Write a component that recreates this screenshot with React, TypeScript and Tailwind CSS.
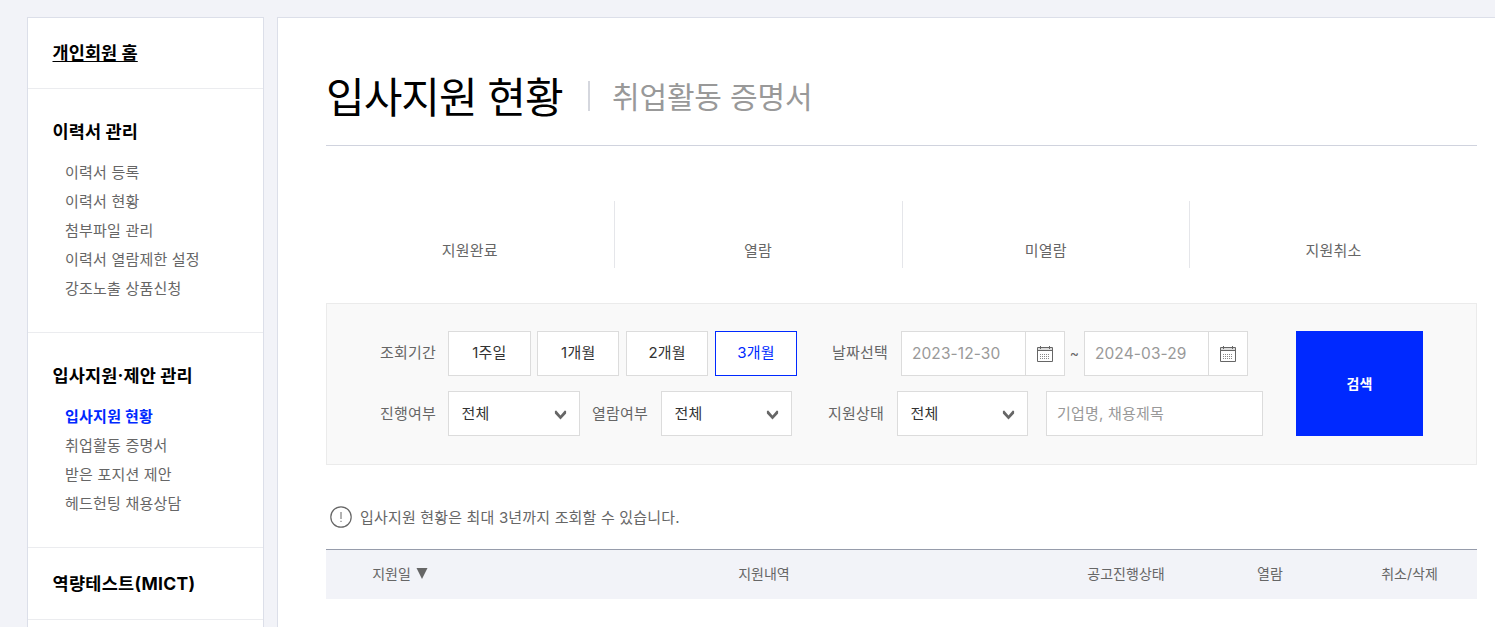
import React from "react";

const resumeMenu = ["이력서 등록", "이력서 현황", "첨부파일 관리", "이력서 열람제한 설정", "강조노출 상품신청"];
const applyMenu = ["입사지원 현황", "취업활동 증명서", "받은 포지션 제안", "헤드헌팅 채용상담"];
const periods = ["1주일", "1개월", "2개월", "3개월"];
const stats = ["지원완료", "열람", "미열람", "지원취소"];

function MenuGroup({ title, items, active }: { title: string; items: string[]; active?: string }) {
  return (
    <section className="border-b border-[#ebecef] pl-[24.5px] pt-[29px] pb-[29px]">
      <h2 className="h-7 text-[17.5px] font-bold leading-7 tracking-[0.15px] text-black">{title}</h2>
      <ul className="pl-[12.5px] pt-[12px]">
        {items.map((item) => (
          <li
            key={item}
            className={
              item === active
                ? "h-[29px] text-[15px] font-bold leading-[29px] tracking-[0.25px] text-[#0029ff]"
                : "h-[29px] text-[15px] leading-[29px] tracking-[0.2px] text-[#666]"
            }
          >
            {item}
          </li>
        ))}
      </ul>
    </section>
  );
}

function CalendarIcon() {
  return (
    <svg width="16" height="16" viewBox="0 0 16 16" fill="none" stroke="#666">
      <path d="M1 2h14v2.5H1z" fill="#ddd" stroke="none" />
      <path d="M.5 1.5h15v14H.5z" />
      <path d="M0 4.5h16" />
      <path d="M3.5 0v3M12.5 0v3" />
      <path d="M3 8.5h10M3 10.5h10M3 12.5h10" stroke="#888" strokeDasharray="1 1" />
    </svg>
  );
}

function DateField({ value }: { value: string }) {
  return (
    <div className="flex h-[45px] w-[164px] border border-[#dcdcdc] bg-white">
      <span className="w-[124px] border-r border-[#dcdcdc] pl-[10px] text-[15.5px] leading-[43px] tracking-[0.1px] text-[#999]">
        {value}
      </span>
      <span className="flex flex-1 items-center justify-center pt-px">
        <CalendarIcon />
      </span>
    </div>
  );
}

function SelectBox({ wide }: { wide?: boolean }) {
  return (
    <div
      className={
        (wide ? "w-[132px]" : "w-[131px]") +
        " flex h-[45px] items-center justify-between border border-[#dcdcdc] bg-white pl-[12.5px] pr-[12px] text-[15px] text-[#333]"
      }
    >
      <span className="leading-[43px] tracking-[0.2px]">전체</span>
      <svg width="13" height="10" viewBox="0 0 13 10" className="mt-[2px]" fill="#666">
        <path d="M.9 1 2.2.6 6.5 5.6 10.8.6l1.3.4v2.4L6.5 9.6.9 3.4z" />
      </svg>
    </div>
  );
}

export default function App() {
  return (
    <div className="flex h-[627px] w-[1495px] overflow-hidden bg-[#f2f3f8] pl-[27px] pt-[17px] font-[Inter,'Noto_Sans_CJK_KR',sans-serif]">
      <aside className="h-[640px] w-[237px] shrink-0 border border-[#dcdfe9] bg-white">
        <div className="h-[71px] border-b border-[#ebecef] pl-[24.5px] pt-[21px]">
          <a className="text-[17.5px] font-bold leading-7 tracking-[0.1px] text-black underline decoration-1 underline-offset-2">개인회원 홈</a>
        </div>
        <MenuGroup title="이력서 관리" items={resumeMenu} />
        <MenuGroup title="입사지원·제안 관리" items={applyMenu} active="입사지원 현황" />
        <div className="h-[72px] border-b border-[#ebecef] pl-[24.5px] pt-[22px]">
          <span className="text-[17.5px] font-bold leading-7 tracking-[0.3px] text-black">역량테스트(MICT)</span>
        </div>
      </aside>

      <main className="ml-[13px] h-[640px] w-[1230px] shrink-0 border border-[#dcdfe9] bg-white pl-12">
        <div className="w-[1151px]">
          <header className="flex h-[128px] items-center border-b border-[#d0d3de] pt-[30px]">
            <h1 className="w-[262px] pt-[2px] text-[42px] leading-[60px] tracking-[-1px] text-black">입사지원 현황</h1>
            <span className="mb-[2px] h-[30px] w-[2px] bg-[#d5d7de]" />
            <span className="ml-[22px] text-[30px] leading-[44px] tracking-[-0.15px] text-[#999]">취업활동 증명서</span>
          </header>

          <div className="mt-[55px] grid h-[67px] grid-cols-4">
            {stats.map((s) => (
              <div key={s} className="border-l border-[#e5e6ea] pt-[38px] text-center text-[15px] leading-6 tracking-[0.2px] text-[#666] first:border-l-0">
                {s}
              </div>
            ))}
          </div>

          <div className="mt-[35px] flex h-[162px] border border-[#ebebeb] bg-[#f9f9f9] pt-[27px] text-[15px] tracking-[0.2px] text-[#666]">
            <div className="w-[969px] pl-[53px]">
              <div className="flex h-[45px] items-center">
                <span className="w-[68.2px]">조회기간</span>
                <div className="flex gap-[6.5px]">
                  {periods.map((p) => (
                    <button
                      key={p}
                      className={
                        p === "3개월"
                          ? "h-[45px] w-[82.4px] border border-[#0029ff] bg-white text-[#0029ff]"
                          : "h-[45px] w-[82.4px] border border-[#dcdcdc] bg-white text-[#333]"
                      }
                    >
                      {p}
                    </button>
                  ))}
                </div>
                <span className="ml-[34.7px] w-[69px]">날짜선택</span>
                <DateField value="2023-12-30" />
                <span className="w-[19px] pb-[2px] text-center text-[14px]">~</span>
                <DateField value="2024-03-29" />
              </div>
              <div className="mt-[15px] flex h-[45px] items-center">
                <span className="w-[68px] pt-[2px]">진행여부</span>
                <SelectBox wide />
                <span className="ml-[12px] w-[69px] pt-[2px]">열람여부</span>
                <SelectBox />
                <span className="ml-[36px] w-[69px] pt-[2px]">지원상태</span>
                <SelectBox />
                <div className="ml-[18px] h-[45px] w-[217px] border border-[#dcdcdc] bg-white pl-[10px] leading-[43px] text-[#999]">
                  기업명, 채용제목
                </div>
              </div>
            </div>
            <button className="h-[105px] w-[127px] bg-[#0029ff] text-[14px] font-bold tracking-normal text-white">검색</button>
          </div>

          <p className="mt-[40px] flex h-6 items-center pl-[4px] text-[15px] tracking-[0.17px] text-[#666]">
            <svg width="22" height="22" viewBox="0 0 22 22" fill="none" stroke="#666" className="mr-[8px]">
              <circle cx="11" cy="11" r="10.2" strokeWidth="1.2" />
              <path d="M11 6v7M11 14.8v1.2" />
            </svg>
            <span className="pt-[2px]">입사지원 현황은 최대 3년까지 조회할 수 있습니다.</span>
          </p>

          <div className="mt-[20px] flex h-[50px] border-t border-[#969cab] bg-[#f2f3f8] text-center text-[14px] leading-[48px] text-[#666]">
            <div className="flex h-[47px] w-[148px] items-center justify-center gap-[5px]">
              <span>지원일</span>
              <svg width="12" height="11" viewBox="0 0 12 11" fill="#666">
                <path d="M.5 0h11L6 11z" />
              </svg>
            </div>
            <div className="w-[580px]">지원내역</div>
            <div className="w-[144px]">공고진행상태</div>
            <div className="w-[144px]">열람</div>
            <div className="w-[135px]">취소/삭제</div>
          </div>
        </div>
      </main>
    </div>
  );
}
